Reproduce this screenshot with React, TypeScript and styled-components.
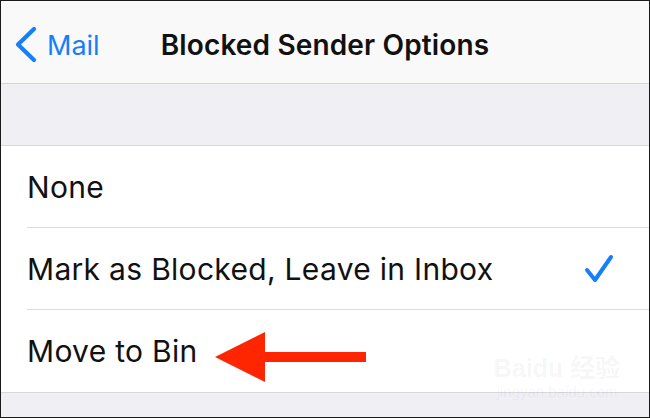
import { createGlobalStyle, styled } from "styled-components";

const GlobalStyle = createGlobalStyle`
  html, body {
    margin: 0;
    padding: 0;
    background: #ffffff;
  }
  body {
    font-family: Inter, "Noto Sans", "Noto Sans CJK SC", sans-serif;
  }
`;

const Frame = styled.div`
  position: relative;
  width: 650px;
  height: 418px;
  box-sizing: border-box;
  border: 1px solid #1a1a1a;
  background: #efeff4;
  display: flex;
  flex-direction: column;
  overflow: hidden;
`;

const NavBar = styled.header`
  height: 83px;
  flex-shrink: 0;
  background: #f9f9f9;
  border-bottom: 1px solid #d6d6da;
  display: grid;
  grid-template-columns: 1fr auto 1fr;
  align-items: center;
  padding-top: 6px;
  box-sizing: border-box;
`;

const BackButton = styled.div`
  display: flex;
  align-items: center;
  gap: 9px;
  padding-left: 13px;
  color: #157efb;
  font-size: 27px;
`;

const Title = styled.h1`
  margin: 0;
  font-size: 28px;
  font-weight: 600;
  color: #111111;
  letter-spacing: 0.15px;
`;

const GroupGap = styled.div`
  height: 61px;
  flex-shrink: 0;
`;

const List = styled.ul`
  margin: 0;
  padding: 0;
  list-style: none;
  background: #ffffff;
  border-top: 1px solid #d8d8dc;
  border-bottom: 1px solid #d8d8dc;
`;

const Row = styled.li<{ $last?: boolean }>`
  height: 82px;
  margin-left: 26px;
  padding-right: 34px;
  display: flex;
  align-items: center;
  justify-content: space-between;
  border-bottom: ${(p) => (p.$last ? "none" : "1px solid #dcdce0")};
  box-sizing: border-box;
  font-size: 30px;
  color: #111111;
  letter-spacing: 0.3px;
`;

const Arrow = styled.svg`
  position: absolute;
  left: 213px;
  top: 330px;
`;

const Watermark = styled.div`
  position: absolute;
  left: 496px;
  top: 352px;
  width: 120px;
  display: flex;
  flex-direction: column;
  align-items: center;
  white-space: nowrap;
  color: rgba(0, 0, 0, 0.05);
  font-family: "Liberation Sans", "Noto Sans CJK SC", sans-serif;
  pointer-events: none;
`;

const MarkBig = styled.div`
  font-size: 25px;
  font-weight: 700;
  line-height: 30px;
`;

const MarkSmall = styled.div`
  font-size: 15px;
  line-height: 18px;
`;

const options = [
  { label: "None", checked: false },
  { label: "Mark as Blocked, Leave in Inbox", checked: true },
  { label: "Move to Bin", checked: false },
];

function Chevron() {
  return (
    <svg width="24" height="40" viewBox="0 0 24 40">
      <path
        d="M20 4 L4 19.5 L20 35"
        fill="none"
        stroke="#157efb"
        strokeWidth="4.2"
        strokeLinecap="round"
        strokeLinejoin="round"
      />
    </svg>
  );
}

function Check() {
  return (
    <svg width="32" height="32" viewBox="0 0 32 32">
      <path
        d="M4 17 L12 27 L28 4"
        fill="none"
        stroke="#157efb"
        strokeWidth="4"
        strokeLinecap="round"
        strokeLinejoin="round"
      />
    </svg>
  );
}

function App() {
  return (
    <>
      <GlobalStyle />
      <Frame>
        <NavBar>
          <BackButton>
            <Chevron />
            <span>Mail</span>
          </BackButton>
          <Title>Blocked Sender Options</Title>
          <div />
        </NavBar>
        <GroupGap />
        <List>
          {options.map((o, i) => (
            <Row key={o.label} $last={i === options.length - 1}>
              <span>{o.label}</span>
              {o.checked && <Check />}
            </Row>
          ))}
        </List>
        <Arrow width="154" height="52" viewBox="0 0 154 52">
          <polygon points="1,26 51,1 51,51" fill="#fe2600" />
          <rect x="50" y="21" width="102" height="10" fill="#fe2600" />
        </Arrow>
        <Watermark>
          <MarkBig>Baidu 经验</MarkBig>
          <MarkSmall>jingyan.baidu.com</MarkSmall>
        </Watermark>
      </Frame>
    </>
  );
}

export default App;
